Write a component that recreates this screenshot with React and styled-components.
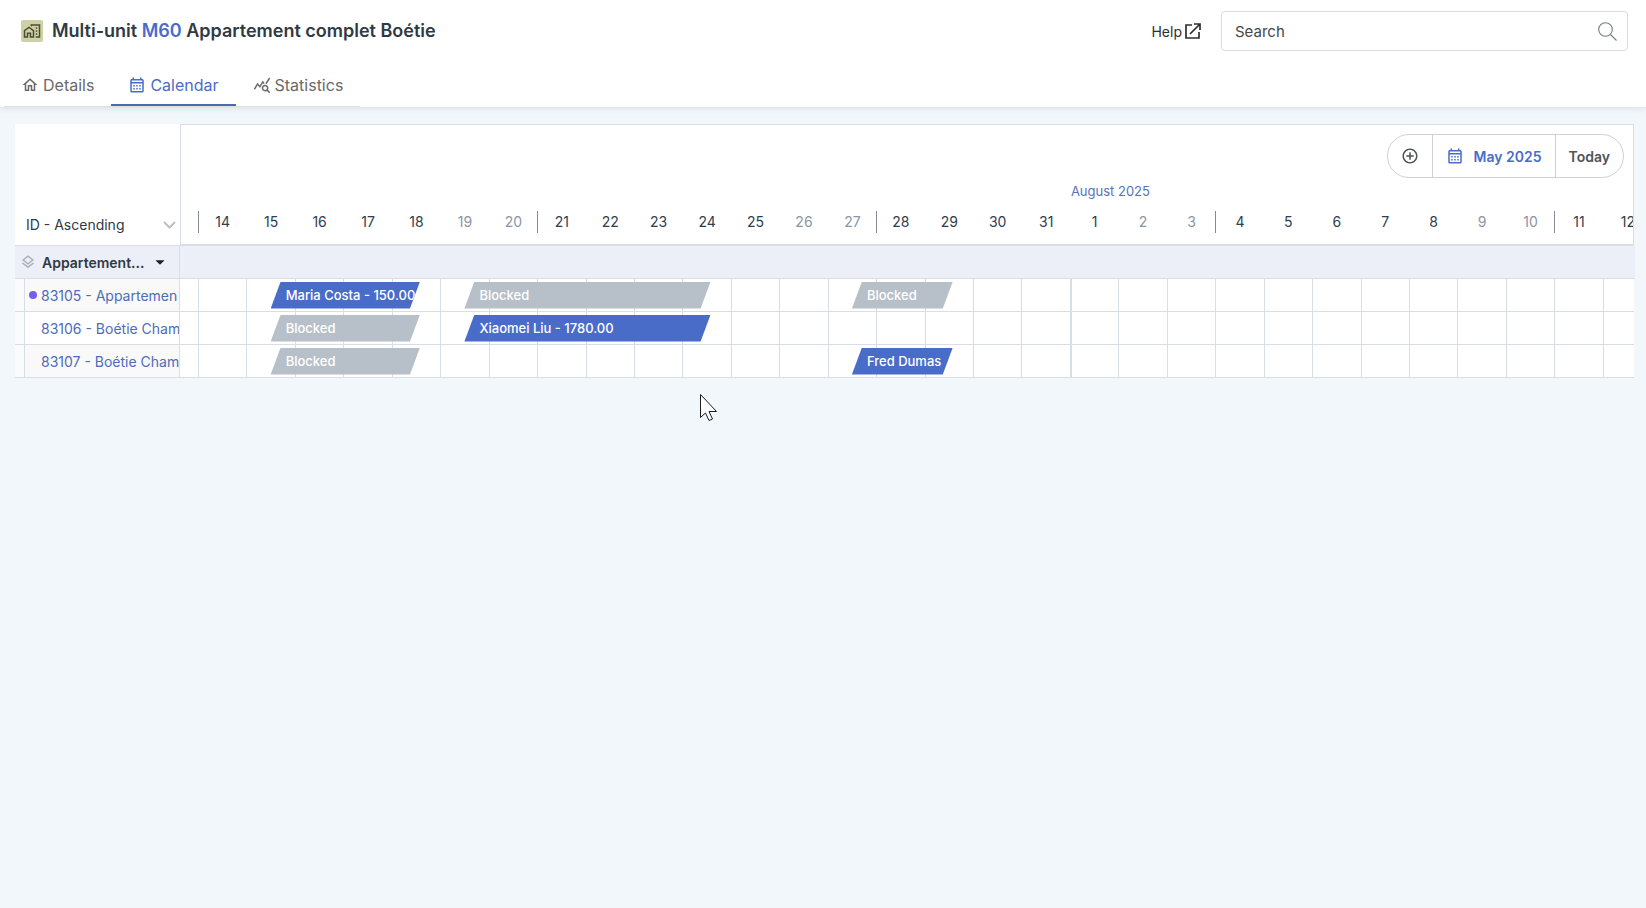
import React from 'react';
import styled, { createGlobalStyle } from 'styled-components';
import {
	MdAddCircleOutline,
	MdArrowDropDown,
	MdOutlineCalendarMonth,
	MdOutlineHome,
	MdOutlineHomeWork,
	MdOutlineLayers,
	MdQueryStats
} from 'react-icons/md';

const GlobalStyle = createGlobalStyle`
	* { box-sizing: border-box; }
	body {
		margin: 0;
		min-height: 100vh;
		background: #f2f7fb;
		color: #2f3a45;
		font-family: Inter, 'Noto Sans', sans-serif;
		font-size: 14px;
	}
	button, input, select { font: inherit; color: inherit; }
`;

const Header = styled.header`
	background: #fff;
	box-shadow: 0 1px 6px 0 rgba(60, 80, 100, 0.16);
`;

const TitleBar = styled.div`
	display: flex;
	align-items: center;
	height: 62px;
	padding: 0 18px 0 21px;
`;

const UnitBadge = styled.span`
	display: flex;
	align-items: center;
	justify-content: center;
	width: 22px;
	height: 22px;
	margin-right: 9px;
	border-radius: 2px;
	background: #cdd1a5;
	color: #4b4c35;
	font-size: 18px;
`;

const Title = styled.h1`
	flex: 1;
	margin: 0;
	font-size: 18px;
	font-weight: 600;
	line-height: 24px;
`;

const UnitLink = styled.a`
	color: #4a6cc9;
	text-decoration: none;
`;

const HelpLink = styled.a`
	display: flex;
	align-items: center;
	gap: 3px;
	margin-right: 20px;
	color: #2b2f33;
	font-size: 14px;
	text-decoration: none;
`;

const SearchBox = styled.label`
	display: flex;
	align-items: center;
	width: 407px;
	height: 40px;
	padding: 0 10px 0 13px;
	border: 1px solid #d9dcdf;
	border-radius: 4px;
`;

const SearchInput = styled.input`
	flex: 1;
	min-width: 0;
	padding: 0;
	border: 0;
	outline: 0;
	background: none;
	font-size: 15px;
	&::placeholder {
		color: #43484d;
		opacity: 1;
	}
`;

const Tabs = styled.nav`
	display: flex;
	width: max-content;
	margin-left: 4px;
	border-bottom: 1px solid #dfe1e3;
`;

const Tab = styled.button`
	display: flex;
	align-items: center;
	gap: 4px;
	height: 44px;
	padding: 4px 17px 0;
	border: 0;
	border-bottom: 2px solid ${({ $active }) => ($active ? '#4c69ad' : 'transparent')};
	background: none;
	color: ${({ $active }) => ($active ? '#4a6cc9' : '#6a6a6a')};
	font-size: 16px;
	cursor: pointer;
	svg { font-size: 18px; }
`;

const Planner = styled.main`
	display: grid;
	grid-template-columns: 165px minmax(0, 1fr);
	margin: 17px 11px 0 15px;
`;

const SortCell = styled.div`
	display: flex;
	align-items: flex-end;
	height: 122px;
	padding: 0 4px 9px 11px;
	border-bottom: 1px solid #d9dde4;
	background: #fff;
`;

const SortSelect = styled.select`
	flex: 1;
	min-width: 0;
	height: 24px;
	padding: 0;
	border: 0;
	outline: 0;
	appearance: none;
	background: none;
	font-size: 14px;
`;

const SortArrow = styled.svg`
	flex: none;
	margin-bottom: 7px;
`;

const CalendarHead = styled.div`
	height: 122px;
	margin-right: 1px;
	padding-top: 9px;
	border: 1px solid #d9dee6;
	border-bottom-width: 2px;
	background: #fff;
	overflow: hidden;
`;

const Toolbar = styled.div`
	display: flex;
	width: max-content;
	height: 44px;
	margin: 0 9px 0 auto;
	border: 1px solid #cfd1d4;
	border-radius: 22px;
`;

const ToolButton = styled.button`
	display: flex;
	align-items: center;
	gap: 10px;
	padding: 0 13px;
	border: 0;
	border-left: ${({ $first }) => ($first ? 0 : '1px solid #cfd1d4')};
	background: none;
	color: ${({ $accent }) => ($accent ? '#4a6cc9' : '#505357')};
	font-size: 14px;
	font-weight: 600;
	cursor: pointer;
	svg { font-size: 18px; }
`;

// two columns for each day, so that a stay can start and end at midday
const HalfDays = styled.div`
	display: grid;
	grid-template-columns: 18px repeat(58, calc(100% / 60)) minmax(0, 1fr);
`;

// runs under the side borders of the head, to line up with the rows below
const HeadDays = styled(HalfDays)`
	margin: 0 -1px;
`;

const MonthLabel = styled.div`
	grid-column: 38 / span 4;
	height: 26px;
	padding-left: 1px;
	color: #5473bd;
	font-size: 13px;
	line-height: 26px;
	white-space: nowrap;
`;

const DayLabel = styled.div`
	grid-column: ${({ $day }) => 2 + $day * 2} / span 2;
	height: 22px;
	margin-top: 7px;
	border-left: 1px solid ${({ $monday }) => ($monday ? '#858b96' : 'transparent')};
	color: ${({ $weekend }) => ($weekend ? '#8a96a5' : '#2f3d4e')};
	font-size: 14px;
	line-height: 22px;
	text-align: center;
`;

const LastDay = styled(DayLabel)`
	grid-column: 60;
	padding-left: 17px;
	text-align: left;
`;

const GroupCell = styled.div`
	display: flex;
	align-items: center;
	height: 33px;
	padding-left: 5px;
	border-right: 1px solid #d9dde4;
	border-bottom: 1px solid #d9dee6;
	background: #eceff7;
	svg { color: #a9adb3; font-size: 16px; }
`;

const GroupToggle = styled.button`
	display: flex;
	align-items: center;
	gap: 4px;
	padding: 0;
	margin-left: 6px;
	border: 0;
	background: none;
	font-size: 14px;
	font-weight: 600;
	cursor: pointer;
	svg { color: #1d2126; font-size: 22px; }
`;

const GroupFill = styled.div`
	border-bottom: 1px solid #d9dee6;
	background: #eceff7;
`;

const UnitLabel = styled.div`
	display: grid;
	grid-template-columns: 9px minmax(0, 1fr);
	height: 33px;
	border-bottom: 1px solid #d9dee6;
	background: #fafbfc;
`;

const UnitCell = styled.div`
	grid-column: 2;
	display: flex;
	align-items: center;
	border: solid #d9dee6;
	border-width: 0 1px;
	background: ${({ $odd }) => ($odd ? '#f9f9fa' : '#fff')};
	overflow: hidden;
`;

const Dot = styled.span`
	flex: none;
	width: 8px;
	height: 8px;
	margin: 0 4px;
	border-radius: 50%;
	background: ${({ $on }) => ($on ? '#7460ea' : 'transparent')};
`;

const UnitName = styled.a`
	color: #4e6cb8;
	font-size: 14px;
	text-decoration: none;
	white-space: nowrap;
`;

const DayRow = styled(HalfDays)`
	height: 33px;
	margin-right: 1px;
	border-bottom: 1px solid #d9dee6;
	background: #fff;
	overflow: hidden;
`;

const DayCell = styled.div`
	grid-row: 1;
	grid-column: ${({ $day }) => 2 + $day * 2} / span ${({ $last }) => ($last ? 1 : 2)};
	border-left: ${({ $monthStart }) => ($monthStart ? 2 : 1)}px solid #d9dee6;
`;

const Stay = styled.button`
	grid-row: 1;
	grid-column: ${({ $from }) => 3 + $from * 2} / span ${({ $nights }) => $nights * 2};
	align-self: center;
	height: 27px;
	margin-right: -4px;
	padding: 0 0 0 15px;
	border: 0;
	background: ${({ $blocked }) => ($blocked ? '#b7bfc9' : '#4a6cc9')};
	clip-path: polygon(10px 0, 100% 0, calc(100% - 10px) 100%, 0 100%);
	color: #fff;
	font-size: 13px;
	font-weight: 500;
	text-align: left;
	white-space: nowrap;
	overflow: hidden;
	cursor: pointer;
`;

const Pointer = styled.svg`
	position: absolute;
	left: 699px;
	top: 393px;
`;

// 14 July to 12 August
const days = Array.from({ length: 30 }, (_, index) => ({
	index,
	date: index < 18 ? 14 + index : index - 17,
	monday: index % 7 === 0,
	weekend: index % 7 > 4
}));

const units = [
	{
		name: '83105 - Appartemen',
		alert: true,
		stays: [
			{ from: 1, nights: 3, label: 'Maria Costa - 150.00' },
			{ from: 5, nights: 5, label: 'Blocked', blocked: true },
			{ from: 13, nights: 2, label: 'Blocked', blocked: true }
		]
	},
	{
		name: '83106 - Boétie Cham',
		stays: [
			{ from: 1, nights: 3, label: 'Blocked', blocked: true },
			{ from: 5, nights: 5, label: 'Xiaomei Liu - 1780.00' }
		]
	},
	{
		name: '83107 - Boétie Cham',
		stays: [
			{ from: 1, nights: 3, label: 'Blocked', blocked: true },
			{ from: 13, nights: 2, label: 'Fred Dumas' }
		]
	}
];

const UnitRow = ({ unit, odd }) => (
	<>
		<UnitLabel>
			<UnitCell $odd={odd}>
				<Dot $on={unit.alert} />
				<UnitName href='#unit'>{unit.name}</UnitName>
			</UnitCell>
		</UnitLabel>
		<DayRow>
			{days.map(({ index }) => (
				<DayCell key={index} $day={index} $last={index === 29} $monthStart={index === 18} />
			))}
			{unit.stays.map((stay) => (
				<Stay key={stay.from} $from={stay.from} $nights={stay.nights} $blocked={stay.blocked}>
					{stay.label}
				</Stay>
			))}
		</DayRow>
	</>
);

const App = () => {
	return (
		<>
			<GlobalStyle />
			<Header>
				<TitleBar>
					<UnitBadge>
						<MdOutlineHomeWork />
					</UnitBadge>
					<Title>
						Multi-unit <UnitLink href='#m60'>M60</UnitLink> Appartement complet Boétie
					</Title>
					<HelpLink href='#help'>
						Help
						<svg width='16' height='16' viewBox='0 0 16 16' fill='none' stroke='currentColor' strokeWidth='1.7'>
							<path d='M7 2H1v13h13V9M9 1h6v6M15 1 5 11' />
						</svg>
					</HelpLink>
					<SearchBox>
						<SearchInput type='text' placeholder='Search' aria-label='Search' />
						<svg width='19' height='19' viewBox='0 0 19 19' fill='none' stroke='#777c82' strokeWidth='1.1'>
							<circle cx='7.5' cy='7.5' r='6.8' />
							<path d='m12.5 12.5 6 6' />
						</svg>
					</SearchBox>
				</TitleBar>
				<Tabs>
					<Tab>
						<MdOutlineHome />
						Details
					</Tab>
					<Tab $active>
						<MdOutlineCalendarMonth />
						Calendar
					</Tab>
					<Tab>
						<MdQueryStats />
						Statistics
					</Tab>
				</Tabs>
			</Header>
			<Planner>
				<SortCell>
					<SortSelect aria-label='Sort by' defaultValue='id'>
						<option value='id'>ID - Ascending</option>
					</SortSelect>
					<SortArrow width='13' height='8' viewBox='0 0 13 8' fill='none' stroke='#b9c0c9' strokeWidth='2'>
						<path d='m1 1 5.5 5.5L12 1' />
					</SortArrow>
				</SortCell>
				<CalendarHead>
					<Toolbar>
						<ToolButton $first aria-label='Add'>
							<MdAddCircleOutline />
						</ToolButton>
						<ToolButton $accent>
							<MdOutlineCalendarMonth />
							May 2025
						</ToolButton>
						<ToolButton>Today</ToolButton>
					</Toolbar>
					<HeadDays>
						<MonthLabel>August 2025</MonthLabel>
					</HeadDays>
					<HeadDays>
						{days.map(({ index, date, monday, weekend }) => {
							const Label = index === 29 ? LastDay : DayLabel;
							return (
								<Label key={index} $day={index} $monday={monday} $weekend={weekend}>
									{date}
								</Label>
							);
						})}
					</HeadDays>
				</CalendarHead>
				<GroupCell>
					<MdOutlineLayers />
					<GroupToggle>
						Appartement...
						<MdArrowDropDown />
					</GroupToggle>
				</GroupCell>
				<GroupFill />
				{units.map((unit, index) => <UnitRow key={unit.name} unit={unit} odd={index % 2 === 0} />)}
			</Planner>
			<Pointer width='20' height='30' viewBox='0 0 20 30' fill='#fff' stroke='#1c1c22' strokeWidth='1'>
				<path d='M1.5 1.5v23l5-4.5 3.5 7.5 3.5-1.5-3.5-7.5h7.5z' />
			</Pointer>
		</>
	);
};

export default App;
